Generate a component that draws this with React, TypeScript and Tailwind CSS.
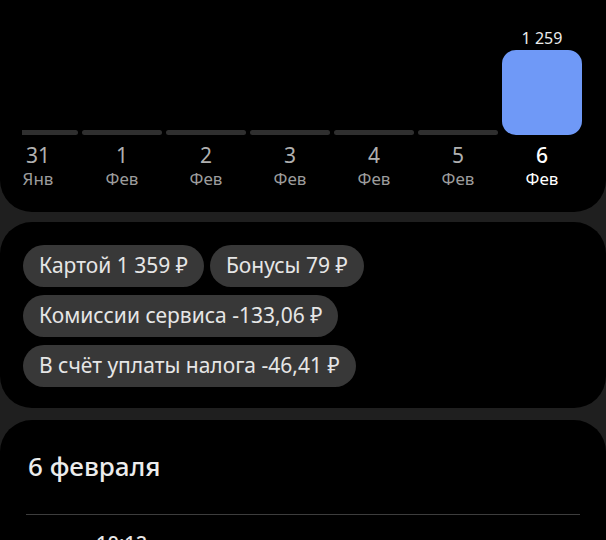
import React from 'react';

interface Day {
  day: string;
  month: string;
  value?: string;
}

const days: Day[] = [
  { day: '31', month: 'Янв' },
  { day: '1', month: 'Фев' },
  { day: '2', month: 'Фев' },
  { day: '3', month: 'Фев' },
  { day: '4', month: 'Фев' },
  { day: '5', month: 'Фев' },
  { day: '6', month: 'Фев', value: '1 259' },
];

const chips = ['Картой 1 359 ₽', 'Бонусы 79 ₽', 'Комиссии сервиса -133,06 ₽', 'В счёт уплаты налога -46,41 ₽'];

function DayColumn({ item }: { item: Day }) {
  const active = Boolean(item.value);
  return (
    <div className="w-[84px] shrink-0 flex flex-col items-center">
      {/* Bar area */}
      <div className="h-[107px] w-full px-[2px] flex flex-col justify-end items-center">
        {active ? (
          <>
            <span className="text-[16px] leading-[20px] text-[#ececec]">{item.value}</span>
            <div className="mt-[2px] h-[85px] w-full rounded-[14px] bg-[#6f99f7]" />
          </>
        ) : (
          <div className="h-[5px] w-full rounded-full bg-[#2f2f2f]" />
        )}
      </div>
      {/* Date */}
      <span
        className={`mt-[7px] text-[21px] leading-[26px] ${active ? 'text-white font-medium' : 'text-[#b0b0b0]'}`}
      >
        {item.day}
      </span>
      <span className={`text-[17px] leading-[22px] ${active ? 'text-white' : 'text-[#9c9c9c]'}`}>{item.month}</span>
    </div>
  );
}

export default function App() {
  return (
    <div className="w-[606px] h-[540px] overflow-hidden bg-[#1f1f1f] font-['Noto_Sans',sans-serif]">
      {/* Chart card */}
      <div className="bg-black rounded-b-[32px] pt-[28px] pb-[22px] px-[22px]">
        <div className="overflow-hidden">
          <div className="flex ml-[-26px]">
            {days.map((d) => (
              <DayColumn key={d.day} item={d} />
            ))}
          </div>
        </div>
      </div>

      {/* Payment breakdown */}
      <div className="mt-[10px] bg-black rounded-[32px] px-[23px] pt-[23px] pb-[21px]">
        <div className="flex flex-wrap gap-x-[6px] gap-y-[8px]">
          {chips.map((c) => (
            <div
              key={c}
              className="h-[42px] px-[16px] rounded-full bg-[#383838] flex items-center text-[21px] text-[#e6e6e6] whitespace-nowrap"
            >
              {c}
            </div>
          ))}
        </div>
      </div>

      {/* Day list */}
      <div className="mt-[12px] bg-black rounded-t-[32px] pt-[30px]">
        <h2 className="px-[28px] text-[26px] leading-[32px] font-medium text-[#ececec]">6 февраля</h2>
        <div className="mt-[32px] mx-[26px] h-px bg-[#3d3d3d]" />
        <div className="mt-[14px] pl-[96px] text-[20px] leading-[28px] font-medium text-[#e6e6e6]">10:12</div>
      </div>
    </div>
  );
}
